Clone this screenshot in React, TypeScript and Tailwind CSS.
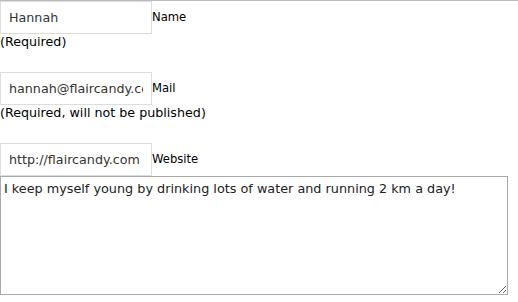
import { useState } from "react";

const Field = ({ value, label }: { value: string; label: string }) => (
    <div className="flex items-center h-[33px]">
        <input
            defaultValue={value}
            className="w-[152px] h-[33px] border border-[#dcdcdc] bg-white px-2 text-[12.7px] text-[#333] outline-none"
        />
        <label className="text-[11.6px] text-black">{label}</label>
    </div>
);

export default function App() {
    const [comment, setComment] = useState(
        "I keep myself young by drinking lots of water and running 2 km a day!"
    );

    return (
        <div className="w-[518px] h-[302px] bg-white border-t border-[#bbbbbb] font-['DejaVu_Sans',Verdana,sans-serif]">
            <Field value="Hannah" label="Name" />
            <p className="text-[12.7px] leading-[16px] text-black mb-[22px]">(Required)</p>
            <Field value="hannah@flaircandy.com" label="Mail" />
            <p className="text-[12.7px] leading-[16px] text-black mb-[22px]">(Required, will not be published)</p>
            <Field value="http://flaircandy.com" label="Website" />
            <textarea
                value={comment}
                onChange={(e) => setComment(e.target.value)}
                className="block w-[508px] h-[119px] border border-[#aaaaaa] px-[3px] py-[2px] text-[12.8px] text-[#222] outline-none"
            />
        </div>
    );
}
